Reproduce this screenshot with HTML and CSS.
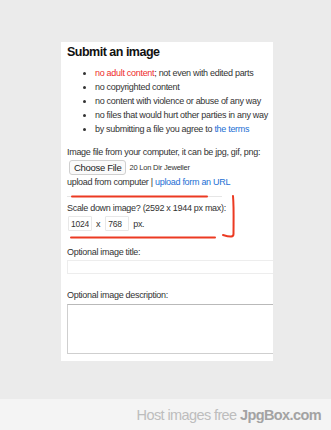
FILE: index.html
```html
<!DOCTYPE html>
<html lang="en">
<head>
    <meta charset="UTF-8" />
    <meta name="viewport" content="width=device-width, initial-scale=1.0"/>
    <title>Submit an image</title>
    <link rel="stylesheet" href="styles.css">
</head>
<body>
    <div class="page">
        <div class="panel">
            <h2>Submit an image</h2>
            <ul class="rules">
                <li><span class="red">no adult content</span>; not even with edited parts</li>
                <li>no copyrighted content</li>
                <li>no content with violence or abuse of any way</li>
                <li>no files that would hurt other parties in any way</li>
                <li>by submitting a file you agree to <a href="#">the terms</a></li>
            </ul>

            <p class="label">Image file from your computer, it can be jpg, gif, png:</p>
            <div class="file-row">
                <button class="choose">Choose File</button>
                <span class="file-name">20 Lon Dir Jeweller</span>
            </div>
            <p class="switch">upload from computer | <a href="#">upload form an URL</a></p>
            <div class="rule-line"></div>

            <p class="label scale">Scale down image? (2592 x 1944 px max):</p>
            <div class="size-row">
                <input class="size" type="text" value="1024">
                <span>x</span>
                <input class="size" type="text" value="768">
                <span>px.</span>
            </div>

            <p class="label opt">Optional image title:</p>
            <input class="title-input" type="text">

            <p class="label opt">Optional image description:</p>
            <textarea class="desc"></textarea>

            <!-- red marker scribbles on top of the form -->
            <svg class="marks" width="212" height="319" viewBox="0 0 212 319">
                <path d="M11 154.5 L146 154.5" />
                <path d="M10 195.5 L154 195.5" />
                <path d="M172 154 C173 165 172.5 182 172.5 192 C172.5 195 170 195.5 162 193" />
            </svg>
        </div>
    </div>
    <footer>
        <span class="host">Host images free</span> <b>JpgBox.com</b>
    </footer>
</body>
</html>
```

FILE: styles.css
```css
body {
    margin: 0;
    background-color: #ebebeb;
    font-family: "Liberation Sans", Arial, sans-serif;
    color: #333;
    font-size: 9px;
    letter-spacing: -0.3px;
    min-height: 430px;
    display: flex;
    flex-direction: column;
}
.page {
    flex: 1;
    padding-top: 42px;
}
.panel {
    position: relative;
    margin-left: 61px;
    width: 212px;
    height: 319px;
    box-sizing: border-box;
    padding: 2px 0 0 6px;
    background-color: #fff;
    overflow: hidden;
}
h2 {
    margin: 0;
    font-size: 12.5px;
    letter-spacing: -0.5px;
    line-height: 17px;
    color: #111;
}
.rules {
    margin: 5px 0 0;
    padding-left: 28px;
}
.rules li {
    line-height: 14px;
}
.red {
    color: #ee2b2b;
}
a {
    color: #1d6fd4;
    text-decoration: none;
}
p {
    margin: 0;
    line-height: 14px;
}
.label {
    margin-top: 9px;
}
.file-row {
    display: flex;
    align-items: center;
    margin-top: 1px;
}
.choose {
    font-family: inherit;
    font-size: 9.5px;
    letter-spacing: -0.3px;
    height: 15px;
    line-height: 13px;
    padding: 0 4px;
    margin-left: 2px;
    background-color: #fafafa;
    border: 1px solid #cfcfcf;
    border-radius: 3px;
    color: #222;
}
.file-name {
    font-size: 7.5px;
    letter-spacing: -0.2px;
    margin-left: 3px;
}
.switch {
    margin-top: 0;
}
.rule-line {
    width: 155px;
    height: 1px;
    background-color: #e6e6e6;
    margin-top: 7px;
}
.label.scale {
    margin-top: 4px;
}
.size-row {
    display: flex;
    align-items: center;
    gap: 4px;
    margin-top: 1px;
}
.size {
    width: 24px;
    height: 15px;
    box-sizing: border-box;
    padding: 0 2px;
    font-family: inherit;
    font-size: 8.5px;
    letter-spacing: -0.2px;
    color: #333;
    border: 1px solid #e8e8e8;
    border-radius: 1px;
    margin: 0 0 0 1px;
}
.label.opt {
    margin-top: 14px;
}
.title-input {
    display: block;
    width: 230px;
    height: 14px;
    box-sizing: border-box;
    margin: 1px 0 0;
    border: 1px solid #ededed;
    padding: 0;
}
.desc {
    display: block;
    width: 230px;
    height: 50px;
    box-sizing: border-box;
    margin: 2px 0 0;
    border: 1px solid #cfcfcf;
    border-top-color: #b9b9b9;
    resize: none;
    padding: 0;
}
.marks {
    position: absolute;
    left: 0;
    top: 0;
    pointer-events: none;
}
.marks path {
    fill: none;
    stroke: #ec3a22;
    stroke-width: 2;
    stroke-linecap: round;
}
footer {
    height: 31px;
    background-color: #f4f4f4;
    text-align: right;
    padding-right: 10px;
    font-size: 14.5px;
    letter-spacing: -0.6px;
    line-height: 33px;
    color: #bdbdbd;
}
footer b {
    color: #a3a3a3;
}
```
